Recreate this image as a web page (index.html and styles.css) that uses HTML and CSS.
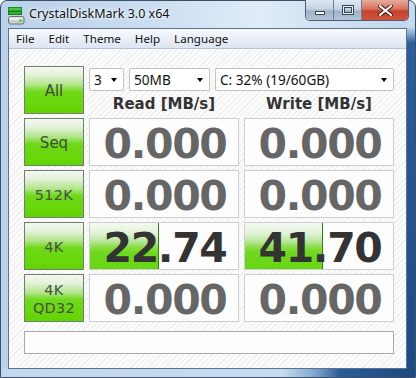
FILE: index.html
```html
<!DOCTYPE html>
<html>
<head>
<meta charset="utf-8">
<link rel="stylesheet" href="styles.css">
</head>
<body>
<div class="window">
  <div class="titlebar">
    <svg class="app-icon" width="17" height="18" viewBox="0 0 17 18">
      <rect x="0.5" y="0.5" width="13" height="3.5" fill="#3cc83c" stroke="#1f8a1f" stroke-width="1"/>
      <rect x="0.5" y="4.5" width="13" height="3" fill="#2fb02f" stroke="#1f7a1f" stroke-width="1"/>
      <rect x="0.5" y="9.5" width="15.5" height="7.5" rx="2" fill="#c9cdd1" stroke="#6b7278" stroke-width="1"/>
      <rect x="1.5" y="10.5" width="13.5" height="2.5" rx="1" fill="#eceff1"/>
      <rect x="11" y="12.5" width="3" height="2" fill="#39d039"/>
    </svg>
    <span class="title">CrystalDiskMark 3.0 x64</span>
    <div class="caption">
      <div class="cap-btn cap-min">
        <svg width="12" height="6" viewBox="0 0 12 6"><rect x="1.5" y="1.5" width="9" height="3" fill="#fff" stroke="#3a4656" stroke-width="1"/></svg>
      </div>
      <div class="cap-btn cap-max">
        <svg width="12" height="10" viewBox="0 0 12 10"><rect x="1.5" y="1.5" width="9" height="7" fill="none" stroke="#3a4656" stroke-width="3"/><rect x="1.5" y="1.5" width="9" height="7" fill="none" stroke="#e8eef5" stroke-width="1"/></svg>
      </div>
      <div class="cap-btn cap-close">
        <svg width="15" height="11" viewBox="0 0 15 11"><path d="M2 1 L13 10 M13 1 L2 10" stroke="#4a1a14" stroke-width="4" stroke-linecap="square"/><path d="M2 1 L13 10 M13 1 L2 10" stroke="#ffffff" stroke-width="2" stroke-linecap="square"/></svg>
      </div>
    </div>
  </div>
  <div class="client">
    <div class="menubar">
      <span class="menu-item">File</span>
      <span class="menu-item">Edit</span>
      <span class="menu-item">Theme</span>
      <span class="menu-item">Help</span>
      <span class="menu-item">Language</span>
    </div>
    <div class="content">
      <div class="grid">
        <div class="btn btn-comic">All</div>
        <div class="top-controls">
          <div class="combos">
            <div class="combo combo-count"><span>3</span><i class="arrow"></i></div>
            <div class="combo combo-size"><span>50MB</span><i class="arrow"></i></div>
            <div class="combo combo-drive"><span>C: 32% (19/60GB)</span><i class="arrow"></i></div>
          </div>
          <div class="headers">
            <div class="header">Read [MB/s]</div>
            <div class="header">Write [MB/s]</div>
          </div>
        </div>

        <div class="btn btn-comic">Seq</div>
        <div class="cell"><span class="num">0.000</span></div>
        <div class="cell"><span class="num">0.000</span></div>

        <div class="btn btn-geo">512K</div>
        <div class="cell"><span class="num">0.000</span></div>
        <div class="cell"><span class="num">0.000</span></div>

        <div class="btn btn-geo">4K</div>
        <div class="cell"><div class="bar" style="width: 69px"></div><span class="num num-dark">22.74</span></div>
        <div class="cell"><div class="bar" style="width: 78px"></div><span class="num num-dark">41.70</span></div>

        <div class="btn btn-geo btn-two">4K<br>QD32</div>
        <div class="cell"><span class="num">0.000</span></div>
        <div class="cell"><span class="num">0.000</span></div>

        <div class="status"></div>
      </div>
    </div>
  </div>
</div>
</body>
</html>
```

FILE: styles.css
```css
html, body {
  margin: 0;
  padding: 0;
  background: #ffffff;
}

.window {
  box-sizing: border-box;
  width: 416px;
  height: 378px;
  padding: 0 8px 8px 7px;
  display: flex;
  flex-direction: column;
  border: 1px solid #3d4f66;
  border-radius: 7px 7px 0 0;
  background:
    linear-gradient(to bottom, #c4daf0 0, #c4daf0 26px, #2c5e99 42px, #1d4b82 100%) right top / 8px 100% no-repeat,
    linear-gradient(to right, #c2d8ef 0, #c6dbf0 68%, #7fa4cc 76%, #2a5c96 82%, #1c4a80 100%) left bottom / 100% 9px no-repeat,
    linear-gradient(to right, #b9d1ea 0%, #c9dcf0 35%, #e0ecf8 62%, #cfe0f2 80%, #c0d6ed 100%);
}

.titlebar {
  height: 27px;
  display: flex;
  align-items: flex-start;
  margin-left: -1px;
  margin-right: -2px;
}

.app-icon {
  margin: 6px 0 0 1px;
  flex: none;
}

.title {
  margin: 5px 0 0 4px;
  font-family: "Noto Sans", "DejaVu Sans", sans-serif;
  font-size: 12.5px;
  line-height: 16px;
  color: #111;
  text-shadow: 0 0 6px #ffffff, 0 0 3px #ffffff;
}

.caption {
  margin-left: auto;
  display: flex;
  height: 20px;
  margin-top: -1px;
  border: 1px solid #4d5d73;
  border-top: none;
  border-radius: 0 0 5px 5px;
  overflow: hidden;
}

.cap-btn {
  display: flex;
  align-items: center;
  justify-content: center;
  height: 20px;
}

.cap-min, .cap-max {
  width: 27px;
  background: linear-gradient(#dfe8f2 0%, #c4d2e2 45%, #9fb2c9 55%, #b3c4d8 100%);
  border-right: 1px solid #6e7f96;
}

.cap-min svg { margin-top: 6px; }

.cap-close {
  width: 46px;
  background: linear-gradient(#e6ab9c 0%, #d7735d 45%, #c3402a 55%, #d0543c 100%);
}

.client {
  flex: 1;
  display: flex;
  flex-direction: column;
  border: 1px solid #5b7391;
  background: #ffffff;
}

.menubar {
  height: 19px;
  display: flex;
  align-items: center;
  padding-left: 0;
  border-bottom: 1px solid #b7c4d7;
  background: linear-gradient(#f7f9fd 0%, #eaeff7 50%, #dde5f1 100%);
}

.menu-item {
  padding: 0 7px;
  font-family: "Noto Sans", "DejaVu Sans", sans-serif;
  font-size: 11.6px;
  color: #111;
  line-height: 19px;
}

.content {
  flex: 1;
  padding: 17px 0 0 15px;
  background: repeating-linear-gradient(135deg, #fbfbfb 0px, #fbfbfb 3px, #eeeeee 3px, #eeeeee 4px);
}

.grid {
  display: grid;
  grid-template-columns: 60px 150px 150px;
  grid-template-rows: 48px 48px 48px 48px 48px 28px;
  column-gap: 5px;
  row-gap: 4px;
}

.btn {
  box-sizing: border-box;
  border: 1px solid #6f7f72;
  background: linear-gradient(#f3f8f0 0%, #e3f2da 18%, #b2e68c 38%, #6fd918 54%, #62d502 100%);
  display: flex;
  align-items: center;
  justify-content: center;
  text-align: center;
  color: #404a40;
}

.btn-comic {
  font-family: "DejaVu Sans", sans-serif;
  font-size: 15px;
  padding-top: 2px;
}

.btn-geo {
  font-family: "DejaVu Sans", sans-serif;
  font-size: 14.5px;
  letter-spacing: 0.3px;
  color: #484e48;
  padding-top: 2px;
}

.btn-two {
  line-height: 18px;
  padding-top: 1px;
}

.top-controls {
  grid-column: 2 / 4;
  display: flex;
  flex-direction: column;
}

.combos {
  display: flex;
  gap: 5px;
  margin-top: 2px;
  height: 23px;
}

.combo {
  box-sizing: border-box;
  height: 23px;
  border: 1px solid #c2c2c2;
  border-radius: 2px;
  background: #ffffff;
  display: flex;
  align-items: center;
  padding: 0 0 0 4px;
  font-family: "Noto Sans", "DejaVu Sans", sans-serif;
  font-size: 13.6px;
  color: #111;
}

.combo span { flex: 1; line-height: 20px; }

.combo-count { width: 35px; }
.combo-size { width: 81px; }
.combo-drive { width: 179px; }

.arrow {
  width: 0;
  height: 0;
  border-left: 3.5px solid transparent;
  border-right: 3.5px solid transparent;
  border-top: 4px solid #000;
  margin-right: 6px;
}

.headers {
  display: flex;
  gap: 5px;
  margin-top: 4px;
}

.header {
  width: 150px;
  text-align: center;
  font-family: "DejaVu Sans", sans-serif;
  font-weight: bold;
  font-size: 15px;
  line-height: 18px;
  color: #333;
}

.cell {
  position: relative;
  box-sizing: border-box;
  border: 1px solid #cecece;
  background: #fdfdfd;
  display: flex;
  align-items: center;
  justify-content: center;
}

.bar {
  position: absolute;
  left: 0;
  top: 0;
  bottom: 0;
  box-sizing: border-box;
  border-right: 1px solid #2f7f1c;
  background: linear-gradient(#f4f9f1 0%, #e2f2d8 22%, #b9e79a 40%, #84dc3c 54%, #6ed81e 66%, #66d612 100%);
}

.num {
  position: relative;
  font-family: "DejaVu Sans", sans-serif;
  font-weight: bold;
  font-size: 41px;
  line-height: 40px;
  letter-spacing: -1.3px;
  color: #666666;
  padding: 4px 0 0 2px;
}

.num-dark {
  color: #333333;
}

.status {
  grid-column: 1 / 4;
  margin-top: 5px;
  box-sizing: border-box;
  border: 1px solid #a9a9a9;
  background: #fdfdfd;
}
```
